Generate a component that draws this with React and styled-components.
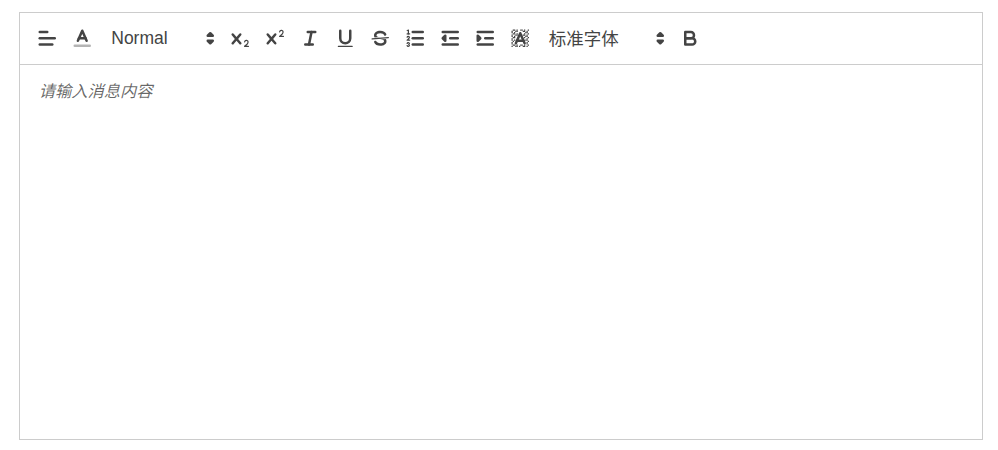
import React from "react";
import styled, { createGlobalStyle } from "styled-components";

const Global = createGlobalStyle`
  html, body { margin: 0; padding: 0; background: #fff; }
`;

const Editor = styled.div`
  box-sizing: border-box;
  width: 964px;
  height: 428px;
  margin: 12px 0 0 19px;
  border: 1px solid #ccc;
  display: flex;
  flex-direction: column;
  font-family: "Liberation Sans", "Noto Sans CJK SC", sans-serif;
`;

const Toolbar = styled.div`
  box-sizing: border-box;
  display: flex;
  align-items: center;
  height: 52px;
  padding: 0 10px;
  border-bottom: 1px solid #ccc;
`;

const Button = styled.div`
  box-sizing: border-box;
  flex: none;
  width: 35px;
  height: 30px;
  padding: 3.75px 6.25px;
  display: flex;
`;

const Picker = styled.div`
  box-sizing: border-box;
  flex: none;
  width: ${(p) => p.$width}px;
  height: 30px;
  padding: 0 1.25px 0 11.25px;
  display: flex;
  align-items: center;
  justify-content: space-between;
  color: #444;
  font-size: 17.5px;
  font-weight: 400;
`;

const PickerLabel = styled.span`
  margin-bottom: ${(p) => (p.$cjk ? 2 : 0)}px;
`;

const Icon = styled.svg.attrs({ viewBox: "0 0 18 18" })`
  flex: none;
  width: 22.5px;
  height: 22.5px;
  display: block;
  fill: none;
  stroke: #444;
  stroke-width: 2;
  stroke-linecap: round;
  stroke-linejoin: round;
  .fill { fill: #444; stroke: none; }
  .thin { stroke-width: 1; }
  .faint { opacity: 0.4; }
  .both { fill: #444; }
`;

const Content = styled.div`
  flex: 1;
  padding: 15px 18.75px;
  font-size: 16.25px;
  line-height: 1.42;
  font-style: italic;
  color: rgba(0, 0, 0, 0.6);
`;

const Chevrons = () => (
  <Icon>
    <polygon points="7 11 9 13 11 11 7 11" />
    <polygon points="7 7 9 5 11 7 7 7" />
  </Icon>
);

const dither = [];
for (let y = 2; y < 16; y++) {
  for (let x = 2; x < 16; x++) {
    const onStripe = (x + y) % 3 === 2;
    const onSecond = (x + y) % 3 === 0 && x % 2 === 0;
    if (!onStripe && !onSecond) continue;
    const half = (y + 0.5 - 4) * 0.44 + 1.3;
    if (y >= 3 && y <= 13 && Math.abs(x + 0.5 - 9) < half) continue;
    dither.push([x, y]);
  }
}

const icons = {
  align: (
    <>
      <line x1="3" x2="15" y1="9" y2="9" />
      <line x1="3" x2="13" y1="14" y2="14" />
      <line x1="3" x2="9" y1="4" y2="4" />
    </>
  ),
  color: (
    <>
      <line className="faint" x1="3" x2="15" y1="15" y2="15" />
      <polyline points="5.5 11 9 3 12.5 11" />
      <line x1="11.63" x2="6.38" y1="9" y2="9" />
    </>
  ),
  sub: (
    <>
      <path className="fill" d="M15.5,15H13.861a3.858,3.858,0,0,0,1.914-2.975,1.8,1.8,0,0,0-1.6-1.751A1.921,1.921,0,0,0,12.021,11.7a0.50013,0.50013,0,1,0,.957.291h0a0.914,0.914,0,0,1,1.053-.725,0.81,0.81,0,0,1,.744.762c0,1.076-1.16971,1.86982-1.93971,2.43082A1.45639,1.45639,0,0,0,12,15.5a0.5,0.5,0,0,0,.5.5h3A0.5,0.5,0,0,0,15.5,15Z" />
      <path className="fill" d="M9.65,5.241a1,1,0,0,0-1.409.108L6,7.964,3.759,5.349A1,1,0,0,0,2.192,6.59178Q2.21541,6.6213,2.241,6.649L4.684,9.5,2.241,12.35A1,1,0,0,0,3.71,13.70722q0.02557-.02768.049-0.05722L6,11.036,8.241,13.65a1,1,0,1,0,1.567-1.24277Q9.78459,12.3777,9.759,12.35L7.316,9.5,9.759,6.651A1,1,0,0,0,9.65,5.241Z" />
    </>
  ),
  sup: (
    <>
      <path className="fill" d="M15.5,7H13.861a4.015,4.015,0,0,0,1.914-2.975,1.8,1.8,0,0,0-1.6-1.751A1.922,1.922,0,0,0,12.021,3.7a0.5,0.5,0,1,0,.957.291,0.917,0.917,0,0,1,1.053-.725,0.81,0.81,0,0,1,.744.762c0,1.077-1.164,1.925-1.934,2.486A1.423,1.423,0,0,0,12,7.5a0.5,0.5,0,0,0,.5.5h3A0.5,0.5,0,0,0,15.5,7Z" />
      <path className="fill" d="M9.651,5.241a1,1,0,0,0-1.41.108L6,7.964,3.759,5.349a1,1,0,1,0-1.519,1.3L4.683,9.5,2.241,12.35a1,1,0,1,0,1.519,1.3L6,11.036,8.241,13.65a1,1,0,0,0,1.519-1.3L7.317,9.5,9.759,6.651A1,1,0,0,0,9.651,5.241Z" />
    </>
  ),
  italic: (
    <>
      <line x1="7" x2="13" y1="4" y2="4" />
      <line x1="5" x2="11" y1="14" y2="14" />
      <line x1="8" x2="10" y1="14" y2="4" />
    </>
  ),
  underline: (
    <>
      <path d="M5,3V9a4.012,4.012,0,0,0,4,4H9a4.012,4.012,0,0,0,4-4V3" />
      <rect className="fill" height="1" rx="0.5" ry="0.5" width="12" x="3" y="15" />
    </>
  ),
  strike: (
    <>
      <line className="thin" x1="15.5" x2="2.5" y1="8.5" y2="9.5" />
      <path className="fill" d="M9.007,8C6.542,7.791,6,7.519,6,6.5,6,5.792,7.283,5,9,5c1.571,0,2.765.679,2.969,1.309a1,1,0,0,0,1.9-.617C13.356,4.106,11.354,3,9,3,6.2,3,4,4.538,4,6.5a3.2,3.2,0,0,0,.5,1.843Z" />
      <path className="fill" d="M8.984,10C11.457,10.208,12,10.479,12,11.5c0,.708-1.283,1.5-3,1.5-1.571,0-2.765-.679-2.969-1.309a1,1,0,1,0-1.9.617C4.644,13.894,6.646,15,9,15c2.8,0,5-1.538,5-3.5a3.2,3.2,0,0,0-.5-1.843Z" />
    </>
  ),
  ordered: (
    <>
      <line x1="7" x2="15" y1="4" y2="4" />
      <line x1="7" x2="15" y1="9" y2="9" />
      <line x1="7" x2="15" y1="14" y2="14" />
      <line className="thin" x1="2.5" x2="4.5" y1="5.5" y2="5.5" />
      <path className="fill" d="M3.5,6A0.5,0.5,0,0,1,3,5.5V3.085l-0.276.138A0.5,0.5,0,0,1,2.053,3c-0.124-.247-0.023-0.324.224-0.447l1-.5A0.5,0.5,0,0,1,4,2.5v3A0.5,0.5,0,0,1,3.5,6Z" />
      <path className="thin" d="M4.5,10.5h-2c0-.234,1.85-1.076,1.85-2.234A0.959,0.959,0,0,0,2.5,8.156" />
      <path className="thin" d="M2.5,14.846a0.959,0.959,0,0,0,1.85-.109A0.7,0.7,0,0,0,3.75,14a0.688,0.688,0,0,0,.6-0.736,0.959,0.959,0,0,0-1.85-.109" />
    </>
  ),
  outdent: (
    <>
      <line x1="3" x2="15" y1="14" y2="14" />
      <line x1="3" x2="15" y1="4" y2="4" />
      <line x1="9" x2="15" y1="9" y2="9" />
      <polyline className="both" points="5 7 5 11 3 9 5 7" />
    </>
  ),
  indent: (
    <>
      <line x1="3" x2="15" y1="14" y2="14" />
      <line x1="3" x2="15" y1="4" y2="4" />
      <line x1="9" x2="15" y1="9" y2="9" />
      <polyline className="both" points="3 7 3 11 5 9 3 7" />
    </>
  ),
  background: (
    <>
      <g className="fill">
        {dither.map(([x, y]) => (
          <rect key={`${x}-${y}`} x={x} y={y} width="1" height="1" />
        ))}
      </g>
      <polyline points="5.5 13 9 5 12.5 13" />
      <line x1="11.63" x2="6.38" y1="11" y2="11" />
    </>
  ),
  bold: (
    <>
      <path d="M5,4H9.5A2.5,2.5,0,0,1,12,6.5v0A2.5,2.5,0,0,1,9.5,9H5A0,0,0,0,1,5,9V4A0,0,0,0,1,5,4Z" />
      <path d="M5,9h5.5A2.5,2.5,0,0,1,13,11.5v0A2.5,2.5,0,0,1,10.5,14H5a0,0,0,0,1,0,0V9A0,0,0,0,1,5,9Z" />
    </>
  ),
};

const Tool = ({ name }) => (
  <Button>
    <Icon>{icons[name]}</Icon>
  </Button>
);

export default function App() {
  return (
    <>
      <Global />
      <Editor>
        <Toolbar>
          <Tool name="align" />
          <Tool name="color" />
          <Picker $width={122.5}>
            <PickerLabel>Normal</PickerLabel>
            <Chevrons />
          </Picker>
          <Tool name="sub" />
          <Tool name="sup" />
          <Tool name="italic" />
          <Tool name="underline" />
          <Tool name="strike" />
          <Tool name="ordered" />
          <Tool name="outdent" />
          <Tool name="indent" />
          <Tool name="background" />
          <Picker $width={135}>
            <PickerLabel $cjk>标准字体</PickerLabel>
            <Chevrons />
          </Picker>
          <Tool name="bold" />
        </Toolbar>
        <Content>请输入消息内容</Content>
      </Editor>
    </>
  );
}
